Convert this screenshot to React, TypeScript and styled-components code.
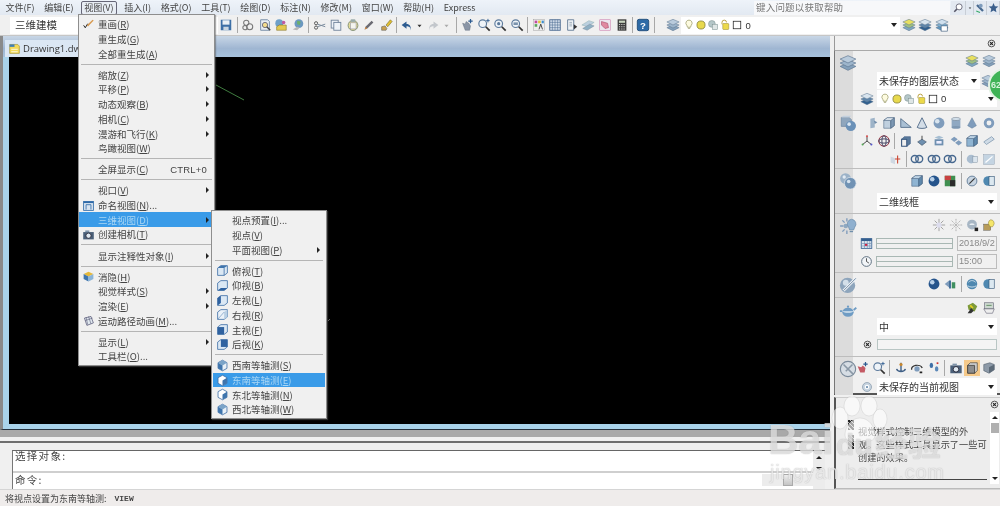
import React from 'react';
import styled, { createGlobalStyle } from 'styled-components';

const Global = createGlobalStyle`
  html, body { margin: 0; padding: 0; background: #f0f0f0; overflow: hidden; }
  * { box-sizing: border-box; }
`;

const CJK = `"Noto Sans CJK SC", "Liberation Sans", sans-serif`;

const Root = styled.div`
  position: relative; width: 1000px; height: 506px; overflow: hidden; display: flex; flex-direction: column;
  font-family: ${CJK}; font-size: 9.5px; color: #444; background: #f0f0f0; filter: blur(0.35px);
`;

/* ---------- icons ---------- */
const cube = (a: string, b: string, c: string) => (<g stroke="#3f5a78" strokeWidth=".6"><path d="M2 5l4-3h8v9l-4 3H2z" fill={a} /><path d="M2 5h8v9" fill="none" /><path d="M10 5l4-3v9l-4 3z" fill={b} /><path d="M2 5l4-3h8l-4 3z" fill={c} /></g>);
const ball = (c: string, h: string, r = 6.2) => (<g><circle cx="8" cy="8" r={r} fill={c} /><circle cx="6" cy="6" r={r * .42} fill={h} /></g>);
const stack = (t: string, m: string, b: string) => (<g stroke="#5e7690" strokeWidth=".6"><path d="M8 8l7 3-7 3.5L1 11z" fill={b} /><path d="M8 5l7 3-7 3.5L1 8z" fill={m} /><path d="M8 1.5l7 3-7 3.5L1 4.5z" fill={t} /></g>);
const lens = (c: string) => (<g><circle cx="6.5" cy="6.5" r="4.4" fill="#eef3f8" stroke={c} strokeWidth="1.3" /><path d="M10 10l4.5 4.5" stroke="#333" strokeWidth="2" /></g>);
const rings = (<g fill="none" stroke="#47688f" strokeWidth="1.6"><circle cx="5.5" cy="8" r="4" /><circle cx="10.5" cy="8" r="4" /></g>);

const glyphs: Record<string, React.ReactNode> = {
  save: <g><rect x="2" y="2" width="12" height="12" fill="#3d6fa6" /><rect x="4" y="2.6" width="8" height="5" fill="#e9f0f6" /><rect x="5" y="10" width="6" height="4" fill="#c9d6e2" /></g>,
  links: <g fill="none" stroke="#777" strokeWidth="1.2"><circle cx="6" cy="5.5" r="3" /><circle cx="10" cy="10" r="3.4" /><circle cx="4.5" cy="11" r="2.4" /></g>,
  docglass: <g><path d="M3 2h8l2 2v10H3z" fill="#e8eef4" stroke="#6c84a0" /><circle cx="8" cy="8" r="3" fill="#f3dc8c" stroke="#667" /><path d="M10 10l4 4" stroke="#444" strokeWidth="1.6" /></g>,
  folderglobe: <g><circle cx="6" cy="6" r="4.5" fill="#6fa0c8" /><path d="M6 8h8v6H3v-4z" fill="#e3c94f" stroke="#7a6a20" strokeWidth=".6" /><circle cx="11" cy="5" r="2" fill="#c05aa0" /></g>,
  globe: <g><circle cx="9" cy="6.5" r="5" fill="#6b98c0" /><path d="M7 3l4 1-1 4-3-1z" fill="#6bb06b" /><path d="M2 13l5-3 3 1-3 3z" fill="#b6b6b6" /></g>,
  scissors: <g stroke="#555" fill="none" strokeWidth="1.1"><circle cx="3.5" cy="6" r="1.8" /><circle cx="3.5" cy="11" r="1.8" /><path d="M5 7l9 3M5 10l9-3" stroke="#7a8a9c" /></g>,
  copy: <g fill="#eef3f8" stroke="#6d8098"><rect x="2.5" y="2.5" width="8" height="9" /><rect x="5.5" y="5" width="8" height="9" /></g>,
  paste: <g><ellipse cx="8" cy="8.5" rx="5.6" ry="5.8" fill="#e5dc9a" stroke="#7b8a70" /><rect x="5" y="5.5" width="6.5" height="7" fill="#f4f4ee" stroke="#889" strokeWidth=".6" /><rect x="5.5" y="1.5" width="5" height="3" fill="#9aa" /></g>,
  pencil: <g><path d="M3 13l1-3 7-7 2 2-7 7z" fill="#6a6a72" /><path d="M3 13l1-3 2 2z" fill="#c84" /></g>,
  brush: <g><path d="M3 14v-4l4-1 2 3-1 2z" fill="#c9a14f" stroke="#555" strokeWidth=".6" /><path d="M8 8l5-6 2 2-5 6z" fill="#e0c030" stroke="#6a5a20" strokeWidth=".6" /></g>,
  undo: <path d="M13 14c1-5-1-8-5-8V3L2 7.5 8 12V9c3 0 5 1 5 5z" fill="#2e5c90" />,
  redo: <path d="M3 14c-1-5 1-8 5-8V3l6 4.5L8 12V9c-3 0-5 1-5 5z" fill="#c3c7cc" />,
  caret: <path d="M5.5 7h5L8 10z" fill="#333" />,
  caretLight: <path d="M5.5 7h5L8 10z" fill="#aaa" />,
  hand: <g><path d="M3 6l3 1 1-3 3 2 2 3-1 5H6z" fill="#8a95a6" stroke="#5d6a7a" strokeWidth=".5" /><path d="M12 1v5M9.5 3.5h5" stroke="#2b5a90" strokeWidth="1.4" /></g>,
  zoomp: <g>{lens('#5c7a9c')}<path d="M12.5 1v4M10.5 3h4" stroke="#2b5a90" /></g>,
  zooma: <g>{lens('#5c7a9c')}<circle cx="6.5" cy="6.5" r="1.8" fill="#5c7a9c" /></g>,
  zoomw: <g>{lens('#5c7a9c')}<path d="M4 5h5v3H4z" fill="#7b93ad" /></g>,
  palette: <g><rect x="2" y="2" width="12" height="12" fill="#eee" stroke="#999" strokeWidth=".5" /><rect x="3" y="3" width="3" height="3" fill="#c24aa0" /><rect x="7" y="3" width="3" height="3" fill="#e3c33c" /><rect x="11" y="3" width="2.5" height="3" fill="#3f8fcf" /><rect x="3" y="7" width="3" height="3" fill="#58a858" /><path d="M8 13l2-6 2 6" fill="none" stroke="#333" /></g>,
  grid: <g><rect x="2" y="2" width="12" height="12" fill="#d4deea" stroke="#47688f" /><path d="M5 2v12M8 2v12M11 2v12M2 5h12M2 8h12M2 11h12" stroke="#47688f" strokeWidth=".6" /></g>,
  docarrow: <g><path d="M3 2h7v12H3z" fill="#eef2f6" stroke="#5f7894" /><path d="M5 5h3M5 7h3M5 9h3" stroke="#789" strokeWidth=".7" /><path d="M10 7l4 3-4 3z" fill="#333" /></g>,
  sheets: <g><path d="M1 8l8-5 6 2-8 5z" fill="#bcd0df" stroke="#8aa" strokeWidth=".5" /><path d="M2 12l8-5 5 2-8 5z" fill="#8fb0c4" stroke="#789" strokeWidth=".5" /></g>,
  pink: <g><rect x="2" y="2" width="12" height="12" fill="#ece7ee" stroke="#c7a" strokeWidth=".6" /><path d="M4 4l7 2 1 5-4 1-4-4z" fill="#e08aa0" stroke="#a04060" strokeWidth=".6" /></g>,
  calc: <g><rect x="3" y="1.5" width="10" height="13" fill="#3e3e3e" /><rect x="4.5" y="3" width="7" height="2.5" fill="#c8d4c0" /><path d="M4.5 7.5h7M4.5 10h7M4.5 12.5h7" stroke="#ccc" strokeDasharray="1.4 1.2" strokeWidth="1.2" /></g>,
  help: <g><rect x="1.5" y="1.5" width="13" height="13" rx="2" fill="#2d6aa6" stroke="#1e4a78" /><text x="8" y="12.5" textAnchor="middle" fontSize="11" fontWeight="700" fill="#fff" fontFamily="Liberation Sans">?</text></g>,
  layers: stack('#b9cbdc', '#9db5cb', '#84a0ba'),
  layersY: stack('#e8e060', '#9fc080', '#7fa8c0'),
  layersD: stack('#d8e4ee', '#5f86aa', '#2f5f8f'),
  layersW: <g>{stack('#cfe0ee', '#7fb0d0', '#5f98c0')}<rect x="7" y="9" width="7" height="6" fill="#fff" stroke="#357" strokeWidth=".7" /></g>,
  bulb: <path d="M8 1.5a4 4 0 013 6.8L10 11H6L5 8.3A4 4 0 018 1.5zM6.5 12.5h3" fill="#fdfbe0" stroke="#9b9b6a" />,
  sun: <circle cx="8" cy="8" r="5.4" fill="#e8d94e" stroke="#7f7a30" />,
  overlay: <g fill="#b4c6c8" stroke="#7c9090" strokeWidth=".7"><circle cx="6.5" cy="6.5" r="4.5" /><rect x="7" y="7" width="7" height="7" fill="#dfe6e6" /></g>,
  lock: <g><path d="M4 7V4.5a3 3 0 016 0" fill="none" stroke="#b49a30" strokeWidth="1.2" /><rect x="5" y="6" width="8" height="8" rx="1" fill="#ecd94a" stroke="#8a7a20" strokeWidth=".6" /></g>,
  square: <rect x="3" y="3" width="10" height="10" fill="#fff" stroke="#222" />,
  extrude: <g><path d="M5 3l5-1v11l-5 1z" fill="#9db3c8" /><path d="M9 5l4 2-3 2z" fill="#6e8aa8" /></g>,
  box: cube('#c0d0df', '#7d98b4', '#e3ebf2'),
  wedge: <path d="M2 13V3l12 10z" fill="#aac0d4" stroke="#516c88" />,
  cone: <path d="M8 2l5.5 11a6 2 0 01-11 0z" fill="#d3dde7" stroke="#4a6584" />,
  sphere: ball('#7f9cbc', '#d9e4ee'),
  sphereD: ball('#25548c', '#b8d0e8'),
  cyl: <g><rect x="3" y="3" width="10" height="10" fill="#8fa8c2" /><ellipse cx="8" cy="3.4" rx="5" ry="1.8" fill="#d2dfea" stroke="#567" strokeWidth=".5" /><ellipse cx="8" cy="13" rx="5" ry="1.6" fill="#7d97b2" /></g>,
  pyramid: <path d="M8 2l5 9-5 3-5-3z" fill="#7f9cbc" stroke="#5a7796" strokeWidth=".5" />,
  torus: <g><circle cx="8" cy="8" r="4.4" fill="none" stroke="#7f9cbc" strokeWidth="3.2" /></g>,
  axis: <g fill="none" stroke="#333" strokeWidth="1"><path d="M8 2v6M8 8l-5 4M8 8l5 4" /><circle cx="8" cy="2.6" r="1.2" fill="#d55" stroke="none" /><circle cx="3" cy="12" r="1.2" fill="#5a5" stroke="none" /><circle cx="13" cy="12" r="1.2" fill="#55c" stroke="none" /></g>,
  wheel: <g fill="none" stroke="#8a2030" strokeWidth="1"><circle cx="8" cy="8" r="6" /><ellipse cx="8" cy="8" rx="6" ry="2.4" stroke="#335" /><ellipse cx="8" cy="8" rx="2.4" ry="6" stroke="#335" /></g>,
  pushbox: <g><path d="M3 6h6v8H3z" fill="none" stroke="#33527a" strokeWidth="1.2" /><path d="M6 3h7v8l-4 3V6H3z" fill="#5a7a9c" stroke="#33527a" strokeWidth=".6" /></g>,
  push: <g><path d="M8 2v5" stroke="#333" /><path d="M3 9l5-3 5 3-5 4z" fill="#6f90b0" stroke="#345" strokeWidth=".6" /></g>,
  shell: <g><path d="M3 6h10v7H3z" fill="#6f90b0" /><path d="M3 4l5-2 5 2-5 2z" fill="#a6bed2" /><rect x="5" y="8" width="6" height="3" fill="#eef" /></g>,
  cubes: <g><path d="M2 6l4-3 4 3-4 3z" fill="#7f9cbc" /><path d="M7 10l4-3 4 3-4 3z" fill="#7f9cbc" /></g>,
  solid: cube('#8fb4d2', '#5f88ac', '#c6dced'),
  slab: <path d="M2 9l9-6 3 3-9 6z" fill="#cfdbe6" stroke="#8aa0b6" />,
  addsel: <g><path d="M3 5l5 2v7l-5-2z" fill="#cfd8e2" /><path d="M11 4v9M8 8h6" stroke="#c8402c" strokeWidth="1.2" /></g>,
  rings,
  face: <g><circle cx="7" cy="8" r="5" fill="#aabdd0" /><rect x="9" y="5" width="5" height="7" fill="#dbe5ee" stroke="#789" strokeWidth=".5" /></g>,
  panel: <g><rect x="2" y="3" width="12" height="11" fill="#c4d4e2" stroke="#89a" strokeWidth=".5" /><path d="M4 12l8-7" stroke="#fff" strokeWidth="1.5" /></g>,
  bigSolid: <g><path d="M2 3h7l2 2v6H2z" fill="#8fa6bd" stroke="#5f7a96" strokeWidth=".5" /><path d="M2 3l2-1.5h7L9 3z" fill="#c2d0de" /><circle cx="10.5" cy="10.5" r="4.6" fill="#6b91b8" /><circle cx="9" cy="9" r="1.6" fill="#dbe7f2" /></g>,
  bigSpheres: <g><circle cx="5.8" cy="5.8" r="4.8" fill="#9bb2c8" /><circle cx="4.6" cy="4.4" r="1.5" fill="#e2ebf3" /><circle cx="10" cy="10" r="5.2" fill="#7092b4" stroke="#e2e8ee" strokeWidth=".6" /><circle cx="8.6" cy="8.4" r="1.6" fill="#d5e2ee" /></g>,
  bigLight: <g><path d="M3 3l2 2M1 8h3M3 13l2-2M7 1v3M7 12v3" stroke="#7f9cbc" strokeWidth="1.2" /><circle cx="6" cy="8" r="2" fill="#8fa8c0" /><path d="M11 2a4.2 4.2 0 013 7l-1 2.5H9.5L8.5 9A4.2 4.2 0 0111 2z" fill="#8fb0cf" stroke="#6a8aa8" strokeWidth=".6" /><path d="M9.5 13h3" stroke="#6a8aa8" /></g>,
  bigDisc: <g><circle cx="7.6" cy="8.4" r="6.8" fill="#8ea5bc" /><circle cx="6" cy="6" r="2.6" fill="#d3dfe9" /><path d="M4 13L15 2" stroke="#eef2f6" strokeWidth="2.4" /><path d="M4 13L15 2" stroke="#5b7792" strokeWidth=".7" /></g>,
  styleA: <g><circle cx="8" cy="8" r="5.6" fill="#c8d5e2" stroke="#5d7895" /><path d="M5 11l6-6" stroke="#333" strokeWidth="1.2" /></g>,
  book: <g><circle cx="7" cy="8" r="5.5" fill="#4f88b0" /><rect x="8" y="3" width="6" height="10" fill="#dce8f0" stroke="#357" strokeWidth=".7" /></g>,
  blueArrow: <g><path d="M2 8l5-4v8z" fill="#7f9cbc" /><path d="M8 4v9" stroke="#2f5f8f" strokeWidth="2" /><path d="M10 6h4v7h-4z" fill="#3f8f60" /></g>,
  earth: <g><circle cx="8" cy="8" r="6" fill="#4f88b0" /><path d="M4 6c3-3 6-2 8 0M3 10c3 2 7 2 10 0" stroke="#d7e6f0" fill="none" /></g>,
  tile: <g><rect x="2" y="2" width="12" height="12" fill="#3f8f50" /><rect x="8" y="7" width="6" height="7" fill="#2b2b2b" /><path d="M2 2h7v5H2z" fill="#c84040" /></g>,
  burstA: <g stroke="#999" strokeWidth="1"><path d="M8 1v14M1 8h14M3 3l10 10M13 3L3 13" /><circle cx="8" cy="8" r="3" fill="#dde" stroke="none" /></g>,
  burstB: <g stroke="#aaa" strokeWidth="1" strokeDasharray="2 1"><path d="M8 1v14M1 8h14M3 3l10 10M13 3L3 13" /></g>,
  moon: <g><circle cx="8" cy="7.5" r="5.6" fill="#a7b6c4" /><path d="M5 8a3 2 0 016 0z" fill="#e7edf2" /><path d="M11 11h4v4h-4z" fill="#222" /></g>,
  lamp: <g><rect x="2" y="7" width="8" height="7" fill="#b89c5a" stroke="#555" strokeWidth=".5" /><path d="M10 2a4 4 0 013 6.5L12 10H9L8 8a4 4 0 012-6z" fill="#f5e66a" stroke="#8a7a30" strokeWidth=".6" /></g>,
  calendar: <g><rect x="1.5" y="2" width="13" height="12" fill="#dfe8f2" stroke="#345f8f" /><rect x="1.5" y="2" width="13" height="3" fill="#345f8f" /><path d="M2 8h12M2 11h12M5.5 5v9M9 5v9M12 5v9" stroke="#6f8fb0" strokeWidth=".8" /><rect x="6" y="8.5" width="3" height="2.4" fill="#c24" /></g>,
  clock: <g><circle cx="8" cy="8" r="6" fill="#f2f5f8" stroke="#5e6f80" strokeWidth="1.2" /><path d="M8 4v4l3 2" stroke="#333" fill="none" /></g>,
  render: <g><path d="M3 5l6-3 5 4-3 6-7-2z" fill="#7d9a3a" /><path d="M3 14l4-6 3 3-3 3z" fill="#333" /><path d="M6 5l3 3" stroke="#e5d020" strokeWidth="2" /></g>,
  printer: <g><rect x="3" y="2" width="10" height="7" fill="#cdd8d0" stroke="#667" strokeWidth=".7" /><path d="M2 9h12l-2 5H5z" fill="#eee" stroke="#667" strokeWidth=".7" /><path d="M5 5h6" stroke="#5a8a5a" /></g>,
  teapot: <g><ellipse cx="8" cy="10" rx="5" ry="4" fill="#6f9cc4" /><path d="M3 9H0.8M13 8l2.4-2" stroke="#6f9cc4" strokeWidth="1.6" /><path d="M3 9c2 2 8 2 10 0" fill="#d9e6f0" /><circle cx="8" cy="5" r="1" fill="#6f9cc4" /></g>,
  compass: <g><circle cx="8" cy="8" r="6.8" fill="#d6dde4" stroke="#7a8a9a" /><path d="M4 4l9 9M12 4l-6 6" stroke="#8a98a6" strokeWidth="1.4" /></g>,
  person: <g><path d="M3 6l4 1 2-2 3 3-1 5H6z" fill="#c45a64" /><path d="M12 1v5M9.5 3.5h5" stroke="#2b5a90" strokeWidth="1.4" /></g>,
  anchor: <g><path d="M8 2v9M3 9c1 4 9 4 10 0" stroke="#3f5f86" strokeWidth="1.6" fill="none" /><circle cx="8" cy="4" r="1.8" fill="#c7862e" /></g>,
  orbit: <g><path d="M2 10a6 4 0 0112-2" fill="none" stroke="#333" strokeWidth="1.4" /><circle cx="8" cy="9" r="3" fill="#7f9cbc" /><path d="M11 12h3v2h-3z" fill="#222" /></g>,
  steps: <g fill="#3f6fa6"><ellipse cx="5" cy="5" rx="2" ry="3" /><ellipse cx="11" cy="9" rx="2" ry="3" fill="#5b88b8" /><path d="M11 1.5h2v2h-2z" fill="#c33" /></g>,
  camera: <g><rect x="1.5" y="5" width="13" height="9" fill="#4a5f78" /><circle cx="8" cy="9.5" r="3.2" fill="#dfe8f0" stroke="#223" /><rect x="4" y="3" width="5" height="2" fill="#7f94aa" /></g>,
  persp: <g><path d="M3 5h8v9H3z" fill="#8c8c8c" stroke="#333" /><path d="M3 5l3-3h8v9l-3 3V5z" fill="#cfcfcf" stroke="#333" strokeWidth=".7" /></g>,
  ortho: <g><path d="M2 4l7-2 5 2v6l-6 4-6-3z" fill="#8d9aa8" stroke="#45535f" strokeWidth=".6" /><path d="M8 7l6-3v6l-6 4z" fill="#5c6a78" /></g>,
  target: <g><circle cx="8" cy="8" r="6" fill="#c6d3df" stroke="#8a9bac" /><circle cx="8" cy="8" r="3" fill="#fff" /><circle cx="8" cy="8" r="1.5" fill="#6f8fae" /></g>,
  check: <g><path d="M2 9l2 3 3-5" stroke="#222" strokeWidth="1.2" fill="none" /><path d="M6 9l7-7 1.4 1.2-7 7.4z" fill="#d89a50" /></g>,
  namedView: <g><rect x="2" y="3" width="12" height="11" fill="#d8e4f0" stroke="#2f6aa8" /><path d="M5 13V7h6v6" stroke="#2f6aa8" fill="none" /><path d="M2 3h12v2H2z" fill="#2f6aa8" /></g>,
  hide: <g><path d="M8 2l6 3-6 3-6-3z" fill="#e6b93a" /><path d="M2 5l6 3v6l-6-3z" fill="#3f75ad" /><path d="M14 5l-6 3v6l6-3z" fill="#8bb4d8" /></g>,
  motion: <g><path d="M3 5l8-2 3 8-8 3z" fill="#dfe7ee" stroke="#446" strokeWidth=".8" /><path d="M5 4l2 9M8 3l3 9M4 8l9-3" stroke="#446" strokeWidth=".6" /></g>,
  vt: <g><path d="M2 5l4-3h8v9l-4 3H2z" fill="#dbe8f4" stroke="#3f6fa6" /><path d="M2 5l4-3h8l-4 3z" fill="#3f75ad" /><path d="M10 5v9" stroke="#3f6fa6" /></g>,
  vb: <g><path d="M2 5l4-3h8v9l-4 3H2z" fill="#dbe8f4" stroke="#3f6fa6" /><path d="M2 14l4-3h8l-4 3z" fill="#2f62a0" /></g>,
  vl: <g><path d="M2 5l4-3h8v9l-4 3H2z" fill="#dbe8f4" stroke="#3f6fa6" /><path d="M2 5l4-3v9l-4 3z" fill="#2f62a0" /></g>,
  vr: <g><path d="M2 5l4-3h8v9l-4 3H2z" fill="#eaf1f8" stroke="#3f6fa6" /><path d="M10 5l4-3v9l-4 3z" fill="#b9cfe4" /><path d="M2 14l8-9" stroke="#3f6fa6" strokeWidth=".6" /></g>,
  vf: <g><path d="M2 5l4-3h8v9l-4 3H2z" fill="#dbe8f4" stroke="#3f6fa6" /><rect x="2" y="5" width="8" height="9" fill="#2f62a0" /></g>,
  vk: <g><path d="M2 5l4-3h8v9l-4 3H2z" fill="#dbe8f4" stroke="#3f6fa6" /><rect x="6" y="2" width="8" height="9" fill="#2f62a0" /></g>,
  iso: <g><path d="M8 1.5l5.5 3v7L8 14.5l-5.5-3v-7z" fill="#e8f0f7" stroke="#3f6fa6" /><path d="M8 1.5l5.5 3L8 8 2.5 4.5z" fill="#7ba4c8" /><path d="M8 8v6.5L2.5 11.5v-7z" fill="#3f75ad" /></g>,
  isoA: <g><path d="M8 1.5l5.5 3v7L8 14.5l-5.5-3v-7z" fill="#ffffff" stroke="#3f6fa6" /><path d="M8 8v6.5l5.5-3v-7z" fill="#3f75ad" /></g>,
  close: <g><circle cx="8" cy="8" r="6" fill="#e8e8e8" stroke="#333" strokeWidth="1.4" /><path d="M5.5 5.5l5 5M10.5 5.5l-5 5" stroke="#222" strokeWidth="2" /></g>,
  search: <g><circle cx="9.5" cy="6.5" r="4" fill="#fff" stroke="#667" strokeWidth="1.2" /><path d="M6.5 9.5L3 13" stroke="#556" strokeWidth="2" /></g>,
  sat: <g><path d="M4 4l8 8" stroke="#486a90" strokeWidth="3" /><circle cx="9" cy="5" r="2.6" fill="#7f9cbc" /><path d="M3 12l5 2" stroke="#3a6" strokeWidth="1.5" /></g>,
  star: <path d="M8 1.5l2 4.6 5 .5-3.8 3.3 1.1 4.9L8 12.2l-4.3 2.6 1.1-4.9L1 6.6l5-.5z" fill="#3b5f8c" />,
  drawing: <g><path d="M2 3h10l2 2v9H2z" fill="#f3da5a" stroke="#8a7a20" strokeWidth=".6" /><path d="M2 3h6v3H2z" fill="#3f7fb8" /><path d="M4 9h8M4 12h8" stroke="#fff" /></g>,
};

const Icon = ({ k, size = 14 }: { k: string; size?: number }) => (
  <svg width={size} height={size} viewBox="0 0 16 16" style={{ flex: 'none', display: 'block' }}>{glyphs[k]}</svg>
);

/* ---------- shared ---------- */
const Tool = styled.span<{ $narrow?: boolean; $active?: boolean }>`
  flex: none; width: ${p => (p.$narrow ? 13.5 : 16.6)}px; height: 16px; display: flex; align-items: center; justify-content: center;
  background: ${p => (p.$active ? '#f5c98a' : 'transparent')};
`;
const Sep = styled.span`
  flex: none; width: 5.2px; height: 16px; display: flex; justify-content: center;
  &::before { content: ''; width: 1px; height: 100%; background: #a8a8a8; }
`;
const ToolGap = styled.span`
  flex: none; width: 8px;
`;
const Tools = ({ list }: { list: string }) => (
  <>
    {list.split(' ').map((k, i) =>
      k === '|' ? <Sep key={i} /> :
      k === '_' ? <ToolGap key={i} /> :
      k[0] === '~' ? <Tool key={i} $narrow><Icon k={k.slice(1)} size={13} /></Tool> :
      k === '*persp' ? <Tool key={i} $active><Icon k="persp" /></Tool> :
      <Tool key={i}><Icon k={k} /></Tool>)}
  </>
);
const ComboBox = styled.div<{ $w?: number }>`
  ${p => (p.$w ? `width:${p.$w}px; flex:none;` : 'flex:1;')}
  height: 17px; background: #fff; display: flex; align-items: center; padding: 0 3px 0 2px; font-size: 10px; color: #333;
`;
const ComboText = styled.span`
  flex: 1; white-space: nowrap; overflow: hidden;
`;
const ComboArrow = styled.span`
  flex: none; width: 0; height: 0; border: 3px solid transparent; border-top: 4px solid #222; border-bottom: 0;
`;
const Zero = styled.span`
  flex: 1; padding-left: 2px; font-family: "Liberation Sans", sans-serif; font-size: 9.5px; color: #333;
`;
const LayerCombo = ({ w }: { w?: number }) => (
  <ComboBox $w={w}>
    {['bulb', 'sun', 'overlay', 'lock', 'square'].map(k => <Icon key={k} k={k} size={12} />)}
    <Zero>0</Zero><ComboArrow />
  </ComboBox>
);

/* ---------- menu bar ---------- */
const MenuBar = styled.header`
  flex: none; height: 15px; display: flex; align-items: center; padding-left: 3px;
  background: linear-gradient(#eef3f9, #e2e9f2); font-size: 9px; color: #444;
`;
const MenuTitle = styled.span<{ $open?: boolean }>`
  flex: none; height: 14px; line-height: 13px; padding: 0 2.5px; margin-right: 4.7px; white-space: nowrap;
  ${p => p.$open && 'border:1px solid #667; border-radius:2px; background:#e8edf4; line-height:11px;'}
`;
const SearchBox = styled.div`
  margin-left: auto; width: 196px; height: 14px; background: #f7f8fa; font-size: 9.5px; color: #777; letter-spacing: .2px; padding-left: 2px; line-height: 13px;
`;
const SearchTools = styled.div`
  flex: none; width: 50px; display: flex; align-items: center; padding-left: 1px; height: 14px;
`;
const SearchBtn = styled.span<{ $w: number }>`
  flex: none; width: ${p => p.$w}px; height: 14px; display: flex; align-items: center; justify-content: center; background: #e3e9f1; border-right: 1px solid #c8ced6;
`;

/* ---------- tool bar ---------- */
const ToolBar = styled.div`
  flex: none; height: 21px; display: flex; align-items: center; padding-left: 10px;
  background: #f0f0f0; border-bottom: 1px solid #c6c6c6;
`;
const WorkspaceCombo = styled.div`
  flex: none; width: 208px; height: 17px; background: #fff; font-size: 10.5px; color: #333; padding-left: 5px; line-height: 16px;
`;

/* ---------- main ---------- */
const Main = styled.main`
  flex: 1; min-height: 0; display: flex;
`;
const WorkColumn = styled.div`
  flex: none; width: 830px; display: flex; flex-direction: column;
`;
const Mdi = styled.div`
  flex: none; height: 394px; display: flex; flex-direction: column; background: #a9d3ea;
  border-left: 3px solid #8a8a8a; border-bottom: 1px solid #27333f;
`;
const MdiHead = styled.div`
  flex: none; height: 21px; padding: 4px 0 0 2px; background: linear-gradient(#c8d6e6 0%, #9fb6d2 60%, #a7c2dc 100%);
`;
const DocTab = styled.div`
  width: 80px; height: 17px; padding-left: 3px; display: flex; align-items: center; gap: 2px; background: #dbe7f4;
  font-family: "Open Sans", "Liberation Sans", sans-serif; font-size: 9.5px; color: #333; white-space: nowrap;
`;
const Canvas = styled.div`
  flex: 1; position: relative; margin: 0 0 5px 6px; background: #000;
`;
const CanvasLine = styled.svg`
  position: absolute; left: 0; top: 0; width: 100%; height: 100%;
`;
const GreyStrip = styled.div`
  flex: none; height: 7px; background: #a9a9a9;
`;
const CommandArea = styled.div`
  flex: 1; background: #f0f0f0; display: flex; flex-direction: column; padding-top: 4px;
`;
const CommandRule = styled.div`
  flex: none; height: 2px; background: #6f6f6f; margin-bottom: 7px;
`;
const CommandBox = styled.div`
  flex: 1; margin-left: 12px; margin-right: 5px; display: flex; border-top: 1px solid #666; border-left: 1px solid #777;
`;
const CommandText = styled.div`
  flex: 1; display: flex; flex-direction: column; background: #fff;
`;
const CommandLine = styled.div<{ $grow?: boolean }>`
  ${p => (p.$grow ? 'height:22px; border-bottom:2px solid #cfcfcf; line-height:10px;' : 'flex:1; line-height:14px;')}
  font-size: 10.5px; letter-spacing: 1.3px; color: #444; padding-left: 2px; display: flex; justify-content: space-between;
`;
const CmdSlider = styled.div`
  flex: none; width: 51px; height: 12px; margin-top: 1px; background: #ececec; display: flex; justify-content: center;
`;
const CmdThumb = styled.div`
  width: 10px; height: 12px; background: linear-gradient(#eee, #c4c4c4); border: 1px solid #aaa;
`;
const CmdScroll = styled.div`
  flex: none; width: 12px; background: #ececec; display: flex; flex-direction: column; align-items: center; padding-top: 5px; gap: 8px;
`;
const CmdUp = styled.span`
  width: 0; height: 0; border: 3px solid transparent; border-bottom: 3px solid #222; border-top: 0;
`;
const CmdDown = styled.span`
  width: 0; height: 0; border: 3px solid transparent; border-top: 3px solid #222; border-bottom: 0;
`;

/* ---------- palette ---------- */
const Palette = styled.aside`
  flex: none; width: 170px; padding-left: 4px; display: flex; flex-direction: column; background: #f0f0f0;
`;
const PaletteHead = styled.div`
  flex: none; height: 14px; display: flex; justify-content: flex-end; align-items: center; padding-right: 4px; border-left: 1px solid #999;
`;
const Panel = styled.div`
  flex: none; height: 345px; border: 1px solid #aaa; border-right: 0; border-bottom: 2px solid #555; display: flex; flex-direction: column; border-left-color: #777;
`;
const Section = styled.section<{ $h: number }>`
  flex: none; height: ${p => p.$h}px; display: flex; border-bottom: 1px solid #bdbdbd;
  &:last-child { border-bottom: 0; flex: 1; }
`;
const SectionSide = styled.div<{ $pt: number }>`
  flex: none; width: 18px; background: #dcdcdc; padding: ${p => p.$pt}px 0 0 4px;
`;
const SectionBody = styled.div<{ $pt: number }>`
  flex: 1; min-width: 0; padding: ${p => p.$pt}px 3px 0 0; display: flex; flex-direction: column;
`;
const IconRow = styled.div<{ $h?: number }>`
  flex: none; height: ${p => p.$h ?? 18}px; display: flex; align-items: center; justify-content: flex-end;
`;
const ComboRow = styled.div<{ $mt?: number; $pl?: number }>`
  flex: none; display: flex; align-items: center; margin-top: ${p => p.$mt ?? 0}px; padding-left: ${p => p.$pl ?? 24}px;
`;
const IconSlot = styled.span`
  flex: none; width: 24px; margin-left: -24px; display: flex; justify-content: center; padding-left: 4px;
`;
const DateRow = styled.div<{ $mt: number }>`
  flex: none; height: 15px; display: flex; align-items: center; margin-top: ${p => p.$mt}px; padding-left: 23px;
`;
const Track = styled.div`
  flex: none; width: 77px; height: 11px; margin-right: 4px; border: 1px solid #a9b8b4; display: flex; align-items: center;
  &::before { content: ''; width: 100%; height: 1px; background: #a9b8b4; }
`;
const DateField = styled.div`
  flex: 1; height: 15px; border: 1px solid #bcbcbc; font-family: "Liberation Sans", sans-serif; font-size: 9.2px; line-height: 13px; color: #888; padding-left: 1px; overflow: hidden; white-space: nowrap;
`;
const SliderBox = styled.div`
  flex: 1; height: 11px; border: 1px solid #b9c6c4; background: #f4f4f4;
`;
const HelpPanel = styled.div`
  flex: 1; margin-top: 2px; border-left: 2px solid #555; background: #ededed; display: flex; border-top: 1px solid #ccc; padding-bottom: 1px; border-bottom: 1px solid #bbb;
`;
const HelpThumb = styled.div`
  flex: none; width: 22px; display: flex; flex-direction: column; align-items: center; gap: 5px; padding: 22px 0 0 8px;
`;
const ThumbMark = styled.span<{ $h: number }>`
  width: 6px; height: ${p => p.$h}px; background: repeating-linear-gradient(45deg, #222 0 2px, #bbb 2px 3px);
`;
const HelpText = styled.div`
  flex: 1; padding-top: 27px; margin-bottom: 7px; border-bottom: 1px solid #444; font-size: 9.2px; line-height: 13.2px; color: #444; margin-right: 3px; white-space: nowrap;
`;
const HelpSide = styled.div`
  flex: none; width: 10px; display: flex; flex-direction: column; align-items: center; padding-top: 2px; margin-right: 1px;
`;
const HelpScroll = styled.div`
  width: 9px; flex: 1; margin: 3px 0 3px; background: #fff; display: flex; flex-direction: column; align-items: center; justify-content: space-between; padding: 4px 0;
`;
const HelpThumbBar = styled.span`
  width: 8px; height: 10px; background: #b0b0b0; margin-bottom: auto; margin-top: 4px;
`;

/* ---------- status ---------- */
const StatusBar = styled.footer`
  flex: none; height: 17px; background: #efeceb; border-top: 1px solid #d5d5d5; display: flex; align-items: center; padding-left: 5px; font-size: 9px; color: #444;
`;
const StatusCmd = styled.span`
  margin-left: 8px; font-family: "Liberation Mono", monospace; font-size: 8px; font-weight: 700;
`;

/* ---------- dropdown menus ---------- */
const Menu = styled.nav<{ $x: number; $y: number; $w: number; $h: number; $inset: number }>`
  position: absolute; left: ${p => p.$x}px; top: ${p => p.$y}px; width: ${p => p.$w}px; height: ${p => p.$h}px;
  padding: 2px ${p => p.$inset}px 0; background: #f0f0f0; border: 1px solid #8e8e8e; box-shadow: 1px 1px 1px rgba(90,90,90,.5); font-size: 9.5px; color: #444;
`;
const MenuRow = styled.div<{ $on?: boolean }>`
  height: 14.7px; display: flex; align-items: center; padding-right: 5px; white-space: nowrap;
  ${p => p.$on && 'background:#3a9be8; color:#a9d6f4;'}
`;
const MenuIcon = styled.span`
  flex: none; width: 19px; display: flex; justify-content: center;
`;
const MenuLabel = styled.span`
  flex: 1;
`;
const Shortcut = styled.span`
  font-family: "Liberation Sans", sans-serif; font-size: 9.5px; padding-right: 2px; letter-spacing: .2px;
`;
const Arrow = styled.span`
  flex: none; width: 0; height: 0; border: 3px solid transparent; border-left: 3px solid #222; border-right: 0;
`;
const MenuSep = styled.div`
  height: 6.4px; display: flex; align-items: center; padding: 0 2px;
  &::before { content: ''; flex: 1; height: 1px; background: #b5b5b5; }
`;

type Entry = { t?: string; u?: string; tail?: string; icon?: string; arrow?: boolean; sc?: string; on?: boolean } | null;
const Rows = ({ items }: { items: Entry[] }) => (
  <>
    {items.map((e, i) => e === null ? <MenuSep key={i} /> : (
      <MenuRow key={i} $on={e.on}>
        <MenuIcon>{e.icon && <Icon k={e.icon} size={13} />}</MenuIcon>
        <MenuLabel>{e.t}(<u>{e.u}</u>){e.tail}</MenuLabel>
        {e.sc && <Shortcut>{e.sc}</Shortcut>}
        {e.arrow && <Arrow />}
      </MenuRow>
    ))}
  </>
);

const viewMenu: Entry[] = [
  { t: '重画', u: 'R', icon: 'check' }, { t: '重生成', u: 'G' }, { t: '全部重生成', u: 'A' }, null,
  { t: '缩放', u: 'Z', arrow: true }, { t: '平移', u: 'P', arrow: true }, { t: '动态观察', u: 'B', arrow: true }, { t: '相机', u: 'C', arrow: true }, { t: '漫游和飞行', u: 'K', arrow: true }, { t: '鸟瞰视图', u: 'W' }, null,
  { t: '全屏显示', u: 'C', sc: 'CTRL+0' }, null,
  { t: '视口', u: 'V', arrow: true }, { t: '命名视图', u: 'N', tail: '...', icon: 'namedView' }, { t: '三维视图', u: 'D', arrow: true, on: true }, { t: '创建相机', u: 'T', icon: 'camera' }, null,
  { t: '显示注释性对象', u: 'I', arrow: true }, null,
  { t: '消隐', u: 'H', icon: 'hide' }, { t: '视觉样式', u: 'S', arrow: true }, { t: '渲染', u: 'E', arrow: true }, { t: '运动路径动画', u: 'M', tail: '...', icon: 'motion' }, null,
  { t: '显示', u: 'L', arrow: true }, { t: '工具栏', u: 'O', tail: '...' },
];
const subMenu: Entry[] = [
  { t: '视点预置', u: 'I', tail: '...' }, { t: '视点', u: 'V' }, { t: '平面视图', u: 'P', arrow: true }, null,
  { t: '俯视', u: 'T', icon: 'vt' }, { t: '仰视', u: 'B', icon: 'vb' }, { t: '左视', u: 'L', icon: 'vl' }, { t: '右视', u: 'R', icon: 'vr' }, { t: '主视', u: 'F', icon: 'vf' }, { t: '后视', u: 'K', icon: 'vk' }, null,
  { t: '西南等轴测', u: 'S', icon: 'iso' }, { t: '东南等轴测', u: 'E', icon: 'isoA', on: true }, { t: '东北等轴测', u: 'N', icon: 'isoA' }, { t: '西北等轴测', u: 'W', icon: 'iso' },
];

/* ---------- badge + watermark ---------- */
const Badge = styled.div`
  position: absolute; left: 988px; top: 68px; width: 34px; height: 34px; border-radius: 50%; background: #3fb356; border: 2px solid #e4f2e4;
  color: #d8f3dc; font: 700 9px "Liberation Sans", sans-serif; line-height: 30px; padding-left: 1px;
`;
const WmBig = styled.div<{ $x: number; $y: number; $s: number }>`
  position: absolute; left: ${p => p.$x}px; top: ${p => p.$y}px; font-size: ${p => p.$s}px; line-height: 1; white-space: nowrap;
  color: rgba(255,255,255,.62); font-family: "Liberation Sans", ${CJK}; font-weight: 700; text-shadow: 0 0 1px rgba(100,100,100,.55);
`;
const WmThin = styled(WmBig)`
  font-weight: 400; letter-spacing: .8px; color: rgba(255,255,255,.72);
`;
const WmPaw = styled.svg`
  position: absolute; left: 830px; top: 396px; width: 58px; height: 48px;
`;

const App = () => (
  <Root>
    <Global />
    <MenuBar>
      {['文件(F)', '编辑(E)', '视图(V)', '插入(I)', '格式(O)', '工具(T)', '绘图(D)', '标注(N)', '修改(M)', '窗口(W)', '帮助(H)', 'Express'].map(m => (
        <MenuTitle key={m} $open={m === '视图(V)'}>{m}</MenuTitle>
      ))}
      <SearchBox>键入问题以获取帮助</SearchBox>
      <SearchTools>
        <SearchBtn $w={15}><Icon k="search" size={12} /></SearchBtn>
        <SearchBtn $w={8}><Icon k="caret" size={8} /></SearchBtn>
        <SearchBtn $w={13}><Icon k="sat" size={12} /></SearchBtn>
        <SearchBtn $w={13}><Icon k="star" size={11} /></SearchBtn>
      </SearchTools>
    </MenuBar>

    <ToolBar>
      <WorkspaceCombo>三维建模</WorkspaceCombo>
      <Tools list="save | links docglass folderglobe globe | scissors copy paste pencil brush | ~undo ~caret ~redo ~caretLight | hand zoomp zooma zoomw | palette grid docarrow sheets pink calc | help | _ layers" />
      <LayerCombo w={219} />
      <Tools list="layersY layersD layersW" />
    </ToolBar>

    <Main>
      <WorkColumn>
        <Mdi>
          <MdiHead>
            <DocTab><Icon k="drawing" size={13} />Drawing1.dwg</DocTab>
          </MdiHead>
          <Canvas>
            <CanvasLine>
              <line x1="207" y1="28" x2="235" y2="43" stroke="#4f9a4f" strokeWidth=".8" />
              <line x1="319" y1="264" x2="321" y2="262" stroke="#777" strokeWidth=".8" />
            </CanvasLine>
          </Canvas>
        </Mdi>
        <GreyStrip />
        <CommandArea>
          <CommandRule />
          <CommandBox>
            <CommandText>
              <CommandLine $grow>选择对象:</CommandLine>
              <CommandLine>命令:<CmdSlider><CmdThumb /></CmdSlider></CommandLine>
            </CommandText>
            <CmdScroll><CmdUp /><CmdDown /></CmdScroll>
          </CommandBox>
        </CommandArea>
      </WorkColumn>

      <Palette>
        <PaletteHead><Icon k="close" size={9} /></PaletteHead>
        <Panel>
          <Section $h={60}>
            <SectionSide $pt={3}><Icon k="layers" size={18} /></SectionSide>
            <SectionBody $pt={2}>
              <IconRow $h={16}><Tools list="layersY layers" /></IconRow>
              <ComboRow $mt={3}>
                <ComboBox $w={103}><ComboText>未保存的图层状态</ComboText><ComboArrow /></ComboBox>
                <Tool><Icon k="layers" /></Tool>
              </ComboRow>
              <ComboRow $mt={1}><IconSlot><Icon k="layersD" /></IconSlot><LayerCombo /></ComboRow>
            </SectionBody>
          </Section>
          <Section $h={58}>
            <SectionSide $pt={3}><Icon k="bigSolid" size={18} /></SectionSide>
            <SectionBody $pt={3}>
              <IconRow><Tools list="extrude box wedge cone sphere cyl pyramid torus" /></IconRow>
              <IconRow><Tools list="axis wheel | pushbox push shell cubes solid slab" /></IconRow>
              <IconRow><Tools list="addsel | rings rings rings | face panel" /></IconRow>
            </SectionBody>
          </Section>
          <Section $h={45}>
            <SectionSide $pt={3}><Icon k="bigSpheres" size={18} /></SectionSide>
            <SectionBody $pt={4}>
              <IconRow $h={16}><Tools list="solid sphereD tile | styleA book" /></IconRow>
              <ComboRow $mt={4}><ComboBox>二维线框<ComboText /><ComboArrow /></ComboBox></ComboRow>
            </SectionBody>
          </Section>
          <Section $h={59}>
            <SectionSide $pt={3}><Icon k="bigLight" size={18} /></SectionSide>
            <SectionBody $pt={3}>
              <IconRow $h={16}><Tools list="burstA burstB moon lamp" /></IconRow>
              <DateRow $mt={3}><IconSlot><Icon k="calendar" size={13} /></IconSlot><Track /><DateField>2018/9/2</DateField></DateRow>
              <DateRow $mt={3}><IconSlot><Icon k="clock" size={13} /></IconSlot><Track /><DateField>15:00</DateField></DateRow>
            </SectionBody>
          </Section>
          <Section $h={25}>
            <SectionSide $pt={3}><Icon k="bigDisc" size={18} /></SectionSide>
            <SectionBody $pt={3}>
              <IconRow $h={16}><Tools list="sphereD blueArrow | earth book" /></IconRow>
            </SectionBody>
          </Section>
          <Section $h={59}>
            <SectionSide $pt={3}><Icon k="teapot" size={18} /></SectionSide>
            <SectionBody $pt={2}>
              <IconRow $h={16}><Tools list="render printer" /></IconRow>
              <ComboRow $mt={2}><ComboBox>中<ComboText /><ComboArrow /></ComboBox></ComboRow>
              <ComboRow $mt={4}><IconSlot><Icon k="close" size={9} /></IconSlot><SliderBox /></ComboRow>
            </SectionBody>
          </Section>
          <Section $h={39}>
            <SectionSide $pt={3}><Icon k="compass" size={18} /></SectionSide>
            <SectionBody $pt={3}>
              <IconRow $h={16}><Tools list="person zoomp | anchor orbit steps | camera *persp ortho" /></IconRow>
              <ComboRow $mt={2}><IconSlot><Icon k="target" size={12} /></IconSlot><ComboBox>未保存的当前视图<ComboText /><ComboArrow /></ComboBox></ComboRow>
            </SectionBody>
          </Section>
        </Panel>
        <HelpPanel>
          <HelpThumb><ThumbMark $h={10} /><ThumbMark $h={14} /></HelpThumb>
          <HelpText>
            视觉样式控制三维模型的外<br />观。这些样式工具显示了一些可<br />创建的效果。
          </HelpText>
          <HelpSide>
            <Icon k="close" size={9} />
            <HelpScroll><CmdUp /><HelpThumbBar /><CmdDown /></HelpScroll>
          </HelpSide>
        </HelpPanel>
      </Palette>
    </Main>

    <StatusBar>将视点设置为东南等轴测:<StatusCmd>VIEW</StatusCmd></StatusBar>

    <Menu $x={78} $y={14} $w={137} $h={352} $inset={0}><Rows items={viewMenu} /></Menu>
    <Menu $x={211} $y={210} $w={116} $h={209} $inset={1}><Rows items={subMenu} /></Menu>

    <Badge>62</Badge>

    <WmPaw viewBox="0 0 58 48">
      <g fill="rgba(255,255,255,.6)" stroke="rgba(150,150,150,.3)" strokeWidth=".6">
        <ellipse cx="10" cy="22" rx="8" ry="11" />
        <ellipse cx="22" cy="10" rx="8" ry="10" />
        <ellipse cx="39" cy="10" rx="8" ry="10" />
        <ellipse cx="50" cy="23" rx="7" ry="10" />
        <path d="M30 22c9 0 15 9 15 17 0 7-8 7-15 6-7 1-15 1-15-6 0-8 6-17 15-17z" />
      </g>
    </WmPaw>
    <WmBig $x={768} $y={419} $s={42}>Bai</WmBig>
    <WmBig $x={836} $y={430} $s={30}>du</WmBig>
    <WmBig $x={875} $y={428} $s={33}>经验</WmBig>
    <WmThin $x={770} $y={462} $s={20}>jingyan.baidu.com</WmThin>
  </Root>
);

export default App;
